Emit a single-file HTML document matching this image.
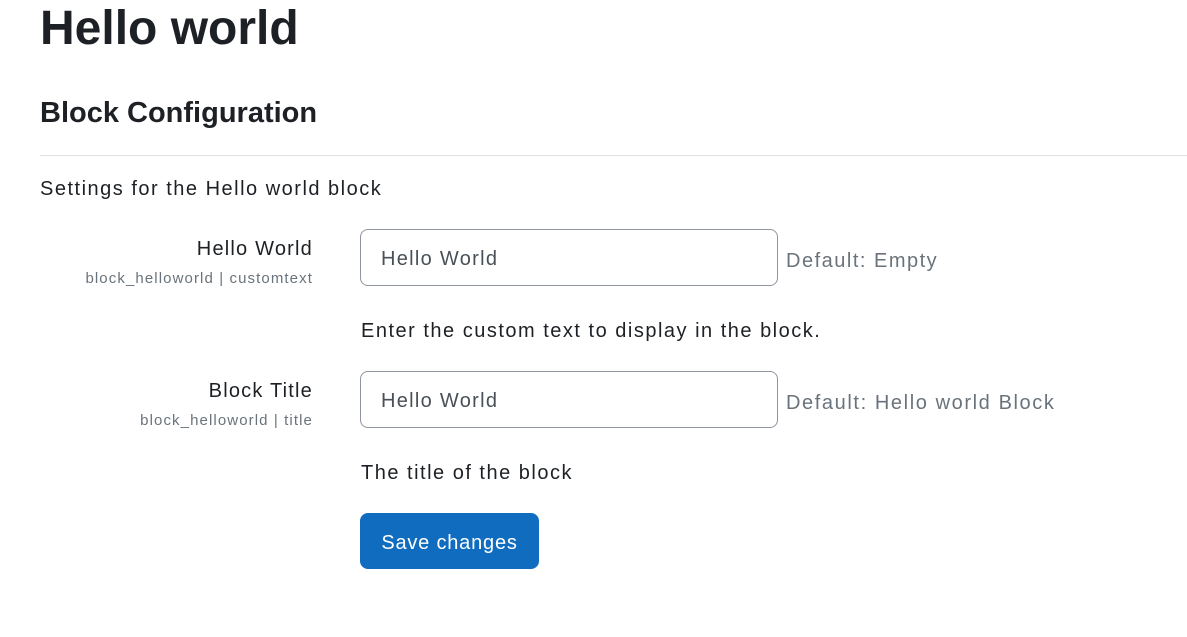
<!DOCTYPE html>
<html><head><meta charset="utf-8"><style>
body{margin:0;width:1187px;height:637px;background:#fff;font-family:"Liberation Sans",sans-serif;color:#1d2125;position:relative;overflow:hidden}
.a{position:absolute;white-space:nowrap}
.t{font-size:20px;letter-spacing:1.5px}
.lbl{right:874px;text-align:right}
.sm{font-size:15px;color:#6a737b;letter-spacing:1.1px}
.in{position:absolute;left:360px;width:418px;height:57px;border:1px solid #8f959e;border-radius:8px;box-sizing:border-box}
.in span{position:absolute;left:20px;top:18px;font-size:20px;letter-spacing:1.3px;color:#495057}
.g{color:#6a737b}
</style></head><body>
<div class="a" style="left:40px;top:1px;font-size:48px;font-weight:bold;line-height:56px">Hello world</div>
<div class="a" style="left:40px;top:96px;font-size:29px;font-weight:bold;line-height:34px">Block Configuration</div>
<div class="a" style="left:40px;top:155px;width:1147px;height:1px;background:#dee2e6"></div>
<div class="a t" style="left:40px;top:178px">Settings for the Hello world block</div>

<div class="a t lbl" style="top:238px;letter-spacing:1.2px">Hello World</div>
<div class="a sm lbl" style="top:270px">block_helloworld | customtext</div>
<div class="in" style="top:229px"><span>Hello World</span></div>
<div class="a t g" style="left:786px;top:250px;letter-spacing:1.5px">Default: Empty</div>
<div class="a t" style="left:361px;top:320px">Enter the custom text to display in the block.</div>

<div class="a t lbl" style="top:380px;letter-spacing:1.2px">Block Title</div>
<div class="a sm lbl" style="top:412px">block_helloworld | title</div>
<div class="in" style="top:371px"><span>Hello World</span></div>
<div class="a t g" style="left:786px;top:392px;letter-spacing:1.6px">Default: Hello world Block</div>
<div class="a t" style="left:361px;top:462px">The title of the block</div>

<div class="a" style="left:360px;top:513px;width:179px;height:56px;background:#0f6cbf;border-radius:8px;color:#fff;font-size:20px;letter-spacing:.8px;line-height:60px;text-align:center">Save changes</div>
</body></html>
